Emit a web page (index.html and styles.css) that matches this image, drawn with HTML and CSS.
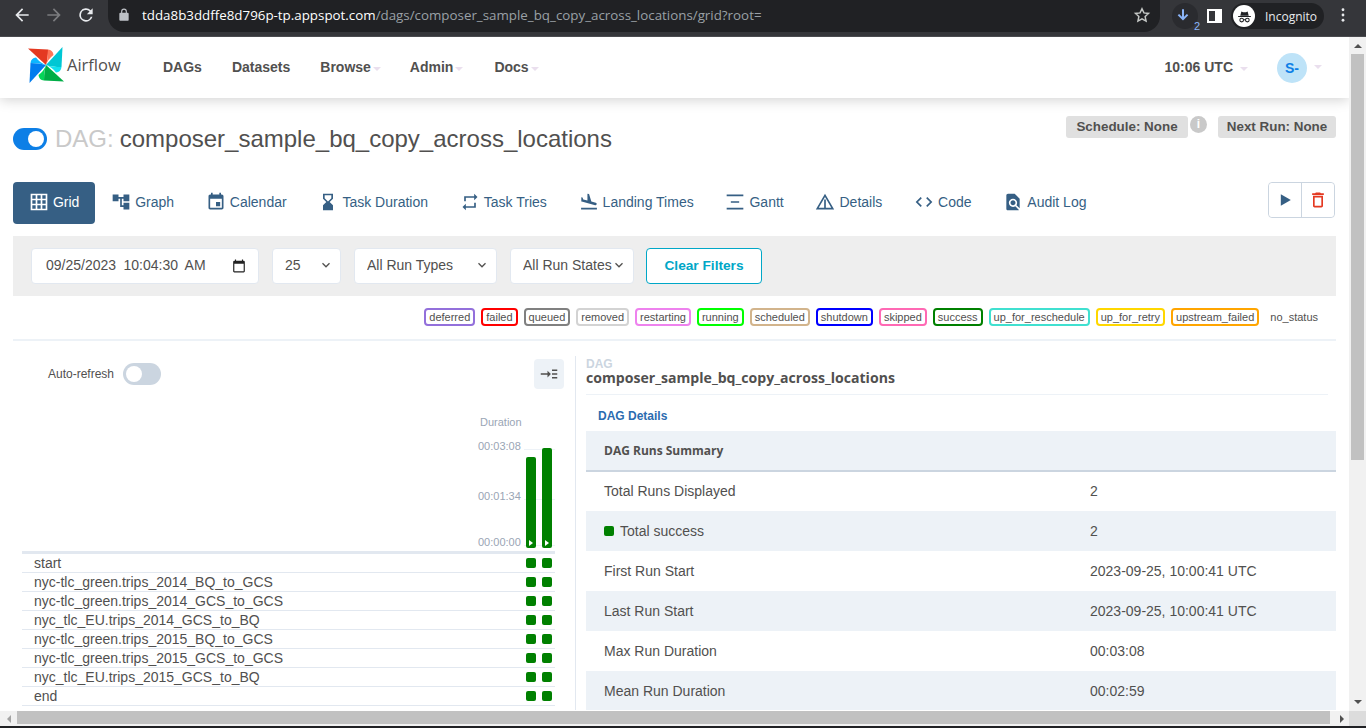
FILE: index.html
```html
<!DOCTYPE html>
<html lang="en">
<head>
    <meta charset="UTF-8">
    <meta name="viewport" content="width=device-width, initial-scale=1.0">
    <title>composer_sample_bq_copy_across_locations - Grid - Airflow</title>
    <link rel="stylesheet" href="styles.css">
</head>
<body>
    <div class="browser-bar">
        <svg class="chrome-btn" viewBox="0 0 24 24"><path fill="#e8eaed" d="M20 11H7.8l5.6-5.6L12 4l-8 8 8 8 1.4-1.4L7.8 13H20z"/></svg>
        <svg class="chrome-btn" viewBox="0 0 24 24"><path fill="#7b7c7f" d="M4 11h12.2l-5.6-5.6L12 4l8 8-8 8-1.4-1.4 5.6-5.6H4z"/></svg>
        <svg class="chrome-btn" viewBox="0 0 24 24"><path fill="#e8eaed" d="M17.65 6.35A8 8 0 1 0 19.73 14h-2.08A6 6 0 1 1 12 6c1.66 0 3.14.69 4.22 1.78L13 11h7V4z"/></svg>
        <div class="address">
            <svg class="lock" viewBox="0 0 24 24"><path fill="#bdc1c6" d="M18 8h-1V6a5 5 0 0 0-10 0v2H6a2 2 0 0 0-2 2v10c0 1.1.9 2 2 2h12a2 2 0 0 0 2-2V10a2 2 0 0 0-2-2zM9 6a3 3 0 0 1 6 0v2H9z"/></svg>
            <span class="url-host">tdda8b3ddffe8d796p-tp.appspot.com</span><span class="url-path">/dags/composer_sample_bq_copy_across_locations/grid?root=</span>
            <svg class="star" viewBox="0 0 24 24"><path fill="none" stroke="#c4c7c5" stroke-width="2" d="M12 3.6l2.6 5.6 6.1.7-4.5 4.2 1.2 6L12 17.1l-5.4 3 1.2-6-4.5-4.2 6.1-.7z"/></svg>
        </div>
        <div class="download">
            <svg viewBox="0 0 24 24"><path fill="none" stroke="#8ab4f8" stroke-width="2.4" d="M12 5v12M6.5 11.5L12 17l5.5-5.5"/></svg>
            <span class="download-count">2</span>
        </div>
        <div class="side-panel"><span></span></div>
        <div class="incognito">
            <span class="incognito-icon">
                <svg viewBox="0 0 24 24"><path fill="#202124" d="M6 11l1.6-6 2.4 1h4l2.4-1 1.6 6zM3 11.4h18v1.4H3z"/><circle cx="8" cy="17" r="2.6" fill="none" stroke="#202124" stroke-width="1.5"/><circle cx="16" cy="17" r="2.6" fill="none" stroke="#202124" stroke-width="1.5"/><path stroke="#202124" stroke-width="1.5" d="M10.5 16.6h3"/></svg>
            </span>
            <span>Incognito</span>
        </div>
        <svg class="chrome-dots" viewBox="0 0 4 16"><circle cx="2" cy="2" r="1.6" fill="#e8eaed"/><circle cx="2" cy="8" r="1.6" fill="#e8eaed"/><circle cx="2" cy="14" r="1.6" fill="#e8eaed"/></svg>
    </div>

    <div class="window">
        <div class="page">
            <nav class="navbar">
                <a class="brand">
                    <svg class="brand-logo" viewBox="0 0 36 36">
                        <g>
                            <path fill="#e43921" d="M0 1.5L20 2.5Q20 12 18 18z"/>
                            <path fill="#ff7557" d="M20 2.5Q25 3 25.5 8Q20 12 18 18Q20 12 20 2.5z"/>
                        </g>
                        <g transform="rotate(90 18 18)">
                            <path fill="#00c7d4" d="M0 1.5L20 2.5Q20 12 18 18z"/>
                            <path fill="#11e1ee" d="M20 2.5Q25 3 25.5 8Q20 12 18 18Q20 12 20 2.5z"/>
                        </g>
                        <g transform="rotate(180 18 18)">
                            <path fill="#00ad46" d="M0 1.5L20 2.5Q20 12 18 18z"/>
                            <path fill="#04d659" d="M20 2.5Q25 3 25.5 8Q20 12 18 18Q20 12 20 2.5z"/>
                        </g>
                        <g transform="rotate(270 18 18)">
                            <path fill="#017cee" d="M0 1.5L20 2.5Q20 12 18 18z"/>
                            <path fill="#0cb6ff" d="M20 2.5Q25 3 25.5 8Q20 12 18 18Q20 12 20 2.5z"/>
                        </g>
                    </svg>
                    <span class="brand-name">Airflow</span>
                </a>
                <ul class="nav-links">
                    <li class="nav-dags">DAGs</li>
                    <li class="nav-datasets">Datasets</li>
                    <li class="nav-browse">Browse<i class="caret"></i></li>
                    <li class="nav-admin">Admin<i class="caret"></i></li>
                    <li>Docs<i class="caret"></i></li>
                </ul>
                <div class="nav-right">
                    <span class="clock">10:06 UTC<i class="caret caret-wide"></i></span>
                    <span class="avatar">S-</span><i class="caret caret-wide"></i>
                </div>
            </nav>

            <div class="content">
                <div class="dag-head">
                    <h1 class="dag-title">
                        <span class="switch"><span class="switch-knob"></span></span>
                        <span class="dag-prefix">DAG:</span>
                        <span>composer_sample_bq_copy_across_locations</span>
                    </h1>
                    <div class="dag-meta">
                        <span class="meta-label meta-schedule">Schedule: None</span>
                        <span class="meta-info">i</span>
                        <span class="meta-label meta-next">Next Run: None</span>
                    </div>
                </div>

                <div class="tabs-row">
                    <a class="tab tab-active"><svg viewBox="0 0 24 24"><path fill="none" stroke="currentColor" stroke-width="2" d="M3 3h18v18H3zM9 3v18M15 3v18M3 9h18M3 15h18"/></svg>Grid</a>
                    <a class="tab"><svg viewBox="0 0 24 24"><path d="M22 11V3h-7v3H9V3H2v8h7V8h2v10h4v3h7v-8h-7v3h-2V8h2v3z"/></svg>Graph</a>
                    <a class="tab"><svg viewBox="0 0 24 24"><path d="M17 12h-5v5h5v-5zM16 1v2H8V1H6v2H5c-1.11 0-1.99.9-1.99 2L3 19c0 1.1.89 2 2 2h14c1.1 0 2-.9 2-2V5c0-1.1-.9-2-2-2h-1V1h-2zm3 18H5V8h14v11z"/></svg>Calendar</a>
                    <a class="tab"><svg viewBox="0 0 24 24"><path d="M18 22l-.01-6L14 12l3.99-4.01L18 2H6v6l4 4-4 3.99V22h12zM8 7.5V4h8v3.5l-4 4-4-4z"/></svg>Task Duration</a>
                    <a class="tab"><svg viewBox="0 0 24 24"><path d="M7 7h10v3l4-4-4-4v3H5v6h2V7zm10 10H7v-3l-4 4 4 4v-3h12v-6h-2v4z"/></svg>Task Tries</a>
                    <a class="tab"><svg viewBox="0 0 24 24"><path d="M2.5 19h19v2h-19zm7.18-5.73l4.35 1.16 5.31 1.42c.8.21 1.62-.26 1.84-1.06.21-.8-.26-1.62-1.06-1.84l-5.31-1.42-2.76-9.02L10.12 2v8.28L5.15 8.95l-.93-2.32-1.45-.39v5.17l1.6.43 5.31 1.43z"/></svg>Landing Times</a>
                    <a class="tab"><svg viewBox="0 0 24 24"><path d="M2 3h20v2H2zM7 11h10v2H7zM2 19h20v2H2z"/></svg>Gantt</a>
                    <a class="tab"><svg viewBox="0 0 24 24"><path d="M1 21h22L12 2 1 21zm3.47-2L12 5.99 19.53 19H4.47zM11 9h2v10h-2z"/></svg>Details</a>
                    <a class="tab"><svg viewBox="0 0 24 24"><path d="M9.4 16.6L4.8 12l4.6-4.6L8 6l-6 6 6 6 1.4-1.4zm5.2 0l4.6-4.6-4.6-4.6L16 6l6 6-6 6-1.4-1.4z"/></svg>Code</a>
                    <a class="tab"><svg viewBox="0 0 24 24"><path d="M20 19.59V8l-6-6H6c-1.1 0-1.99.9-1.99 2L4 20c0 1.1.89 2 2 2h12c.45 0 .85-.15 1.19-.4l-4.43-4.43c-.8.52-1.74.83-2.76.83-2.76 0-5-2.24-5-5s2.24-5 5-5 5 2.24 5 5c0 1.02-.31 1.96-.83 2.75L20 19.59zM9 13c0 1.66 1.34 3 3 3s3-1.34 3-3-1.34-3-3-3-3 1.34-3 3z"/></svg>Audit Log</a>
                    <div class="tab-actions">
                        <button class="action-btn"><svg viewBox="0 0 24 24"><path fill="#365f84" d="M7 5v14l12-7z"/></svg></button>
                        <button class="action-btn"><svg viewBox="0 0 24 24"><path fill="#e43921" d="M6 19c0 1.1.9 2 2 2h8c1.1 0 2-.9 2-2V7H6v12zM8 9h8v10H8V9zm7.5-5l-1-1h-5l-1 1H5v2h14V4z"/></svg></button>
                    </div>
                </div>

                <div class="filters">
                    <div class="date-wrap">
                        <input class="date-input" type="text" value="09/25/2023 10:04:30 AM">
                        <svg class="date-icon" viewBox="0 0 24 24"><path fill="#222" d="M20 3h-1V1h-2v2H7V1H5v2H4a2 2 0 0 0-2 2v16c0 1.1.9 2 2 2h16a2 2 0 0 0 2-2V5a2 2 0 0 0-2-2zm0 18H4V8h16z"/></svg>
                    </div>
                    <div class="select-wrap select-limit">
                        <select><option>25</option></select>
                        <svg class="chevron" viewBox="0 0 24 24"><path fill="none" stroke="#51504f" stroke-width="2.2" d="M6 9l6 6 6-6"/></svg>
                    </div>
                    <div class="select-wrap select-types">
                        <select><option>All Run Types</option></select>
                        <svg class="chevron" viewBox="0 0 24 24"><path fill="none" stroke="#51504f" stroke-width="2.2" d="M6 9l6 6 6-6"/></svg>
                    </div>
                    <div class="select-wrap select-states">
                        <select><option>All Run States</option></select>
                        <svg class="chevron" viewBox="0 0 24 24"><path fill="none" stroke="#51504f" stroke-width="2.2" d="M6 9l6 6 6-6"/></svg>
                    </div>
                    <button class="clear-btn">Clear Filters</button>
                </div>

                <div class="legend">
                    <span class="state state-deferred">deferred</span>
                    <span class="state state-failed">failed</span>
                    <span class="state state-queued">queued</span>
                    <span class="state state-removed">removed</span>
                    <span class="state state-restarting">restarting</span>
                    <span class="state state-running">running</span>
                    <span class="state state-scheduled">scheduled</span>
                    <span class="state state-shutdown">shutdown</span>
                    <span class="state state-skipped">skipped</span>
                    <span class="state state-success">success</span>
                    <span class="state state-reschedule">up_for_reschedule</span>
                    <span class="state state-retry">up_for_retry</span>
                    <span class="state state-upstream">upstream_failed</span>
                    <span class="state">no_status</span>
                </div>

                <div class="main">
                    <div class="grid-panel">
                        <div class="grid-toolbar">
                            <span class="refresh-label">Auto-refresh</span>
                            <span class="switch switch-off"><span class="switch-knob"></span></span>
                            <button class="collapse-btn">
                                <svg viewBox="0 0 24 24"><path fill="#51504f" d="M1 11h9V7.5l4.5 4.5-4.5 4.5V13H1zM16 6h7v2h-7zM16 11h7v2h-7zM16 16h7v2h-7z"/></svg>
                            </button>
                        </div>
                        <div class="duration-label">Duration</div>
                        <div class="chart">
                            <div class="tick"><span>00:03:08</span><i></i></div>
                            <div class="tick"><span>00:01:34</span><i></i></div>
                            <div class="tick"><span>00:00:00</span><i></i></div>
                            <div class="bars">
                                <div class="bar bar-short"><svg viewBox="0 0 10 10"><path fill="#fff" d="M3 2v6l4-3z"/></svg></div>
                                <div class="bar bar-tall"><svg viewBox="0 0 10 10"><path fill="#fff" d="M3 2v6l4-3z"/></svg></div>
                            </div>
                        </div>
                        <div class="task-list">
                            <div class="task-row"><span>start</span><span class="task-runs"><i></i><i></i></span></div>
                            <div class="task-row"><span>nyc-tlc_green.trips_2014_BQ_to_GCS</span><span class="task-runs"><i></i><i></i></span></div>
                            <div class="task-row"><span>nyc-tlc_green.trips_2014_GCS_to_GCS</span><span class="task-runs"><i></i><i></i></span></div>
                            <div class="task-row"><span>nyc_tlc_EU.trips_2014_GCS_to_BQ</span><span class="task-runs"><i></i><i></i></span></div>
                            <div class="task-row"><span>nyc-tlc_green.trips_2015_BQ_to_GCS</span><span class="task-runs"><i></i><i></i></span></div>
                            <div class="task-row"><span>nyc-tlc_green.trips_2015_GCS_to_GCS</span><span class="task-runs"><i></i><i></i></span></div>
                            <div class="task-row"><span>nyc_tlc_EU.trips_2015_GCS_to_BQ</span><span class="task-runs"><i></i><i></i></span></div>
                            <div class="task-row"><span>end</span><span class="task-runs"><i></i><i></i></span></div>
                        </div>
                    </div>

                    <div class="details-panel">
                        <div class="details-head">
                            <div class="details-kicker">DAG</div>
                            <div class="details-name">composer_sample_bq_copy_across_locations</div>
                        </div>
                        <div class="details-link">DAG Details</div>
                        <table class="summary">
                            <thead>
                                <tr><th colspan="2">DAG Runs Summary</th></tr>
                            </thead>
                            <tbody>
                                <tr><td>Total Runs Displayed</td><td>2</td></tr>
                                <tr><td><i class="dot-success"></i>Total success</td><td>2</td></tr>
                                <tr><td>First Run Start</td><td>2023-09-25, 10:00:41 UTC</td></tr>
                                <tr><td>Last Run Start</td><td>2023-09-25, 10:00:41 UTC</td></tr>
                                <tr><td>Max Run Duration</td><td>00:03:08</td></tr>
                                <tr><td>Mean Run Duration</td><td>00:02:59</td></tr>
                            </tbody>
                        </table>
                    </div>
                </div>
            </div>
        </div>

        <div class="vscroll">
            <span class="arrow-up"></span>
            <div class="vscroll-thumb"></div>
            <span class="arrow-down"></span>
        </div>
    </div>

    <div class="hscroll">
        <div class="hscroll-end"><span class="arrow-left"></span></div>
        <div class="hscroll-thumb"></div>
        <div class="hscroll-end hscroll-end-right"><span class="arrow-right"></span></div>
        <div class="hscroll-corner"></div>
    </div>
    <div class="taskbar-edge"></div>
</body>
</html>
```

FILE: styles.css
```css
* {
    margin: 0;
    padding: 0;
    box-sizing: border-box;
}

html, body {
    height: 728px;
    overflow: hidden;
}

body {
    background: white;
    color: #51504f;
    font-family: 'Liberation Sans', Arial, sans-serif;
    font-size: 14px;
}

i {
    font-style: normal;
}

/* browser chrome */
.browser-bar {
    height: 37px;
    background: #35363a;
    border-bottom: 1px solid #4a4b4f;
    display: flex;
    align-items: flex-start;
    padding-left: 12px;
    color: #e8eaed;
}

.chrome-btn {
    width: 20px;
    height: 20px;
    margin: 5px 12px 0 0;
}

.address {
    width: 1052px;
    height: 32px;
    background: #202124;
    border-radius: 0 0 16px 16px;
    display: flex;
    align-items: center;
    padding: 0 9px 2px 9px;
    font-family: 'Open Sans', sans-serif;
    font-size: 13.35px;
}

.lock {
    width: 14px;
    height: 14px;
    margin-right: 11px;
}

.url-host {
    color: white;
}

.url-path {
    color: #9aa0a6;
}

.star {
    width: 18px;
    height: 18px;
    margin-left: auto;
}

.download {
    position: relative;
    width: 26px;
    height: 26px;
    margin: 3px 0 0 12px;
    background: #2a2b2f;
    border-radius: 50%;
}

.download svg {
    width: 20px;
    height: 20px;
    margin: 2px 0 0 1px;
}

.download-count {
    position: absolute;
    right: -2px;
    bottom: -3px;
    color: #8ab4f8;
    font-size: 11px;
}

.side-panel {
    width: 15px;
    height: 14px;
    margin: 9px 0 0 9px;
    background: white;
    border: 2px solid white;
}

.side-panel span {
    display: block;
    width: 6px;
    height: 100%;
    background: #35363a;
}

.incognito {
    width: 93px;
    height: 26px;
    margin: 3px 0 0 9px;
    background: #202124;
    border-radius: 13px;
    display: flex;
    align-items: center;
    gap: 10px;
    padding-left: 2px;
    font-family: 'Open Sans', sans-serif;
    font-size: 12px;
}

.incognito-icon {
    width: 22px;
    height: 22px;
    background: white;
    border-radius: 50%;
    display: flex;
    align-items: center;
    justify-content: center;
}

.incognito-icon svg {
    width: 17px;
    height: 17px;
}

.chrome-dots {
    width: 4px;
    height: 14px;
    margin: 8px 0 0 17px;
}

/* page frame */
.window {
    height: 674px;
    display: flex;
}

.page {
    width: 1349px;
    overflow: hidden;
}

.vscroll {
    width: 17px;
    background: #f1f1f1;
    display: flex;
    flex-direction: column;
    align-items: center;
}

.vscroll-thumb {
    width: 13px;
    height: 406px;
    margin-top: 6px;
    background: #c1c1c1;
}

.arrow-up {
    margin-top: 7px;
    border: 4px solid transparent;
    border-top: 0;
    border-bottom: 4px solid #505050;
}

.arrow-down {
    margin-top: auto;
    margin-bottom: 7px;
    border: 4px solid transparent;
    border-bottom: 0;
    border-top: 4px solid #505050;
}

.hscroll {
    height: 15px;
    background: #f1f1f1;
    display: flex;
    align-items: stretch;
}

.hscroll-end {
    width: 17px;
    display: flex;
    align-items: center;
    justify-content: center;
}

.hscroll-end-right {
    width: 19px;
    padding-left: 4px;
}

.hscroll-thumb {
    width: 1313px;
    height: 13px;
    background: #c1c1c1;
}

.hscroll-corner {
    width: 17px;
    background: #dcdcdc;
}

.arrow-left {
    border: 4px solid transparent;
    border-left: 0;
    border-right: 4px solid #a3a3a3;
}

.arrow-right {
    border: 4px solid transparent;
    border-right: 0;
    border-left: 4px solid #505050;
}

.taskbar-edge {
    height: 2px;
    background: #202124;
}

/* navbar */
.navbar {
    height: 61px;
    background: white;
    box-shadow: 0 2px 12px rgba(0,0,0,0.18);
    display: flex;
    align-items: center;
    padding: 0 0 2px 28px;
    position: relative;
}

.brand {
    display: flex;
    align-items: center;
    width: 135px;
}

.brand-logo {
    width: 36px;
    height: 36px;
    margin-bottom: 3px;
}

.brand-name {
    margin: 0 0 4px 3px;
    font-family: 'Open Sans', sans-serif;
    font-size: 16.5px;
}

.nav-links {
    list-style: none;
    display: flex;
    font-weight: bold;
}

.nav-links li {
    margin-right: 30px;
}

.nav-links .nav-browse {
    margin-right: 29px;
}

.nav-links .nav-admin {
    margin-right: 31px;
}

.caret {
    display: inline-block;
    margin-left: 2px;
    vertical-align: 1px;
    border: 4px solid transparent;
    border-bottom: 0;
    border-top: 4px solid #eadfee;
}

.caret-wide {
    margin-left: 7px;
}

.nav-right {
    margin-left: auto;
    display: flex;
    align-items: center;
    padding-right: 27px;
    font-weight: bold;
}

.clock {
    margin-right: 29px;
}

.avatar {
    width: 30px;
    height: 30px;
    margin-top: 2px;
    background: #bee3f8;
    color: #0d7fe6;
    border-radius: 50%;
    display: flex;
    align-items: center;
    justify-content: center;
}

/* dag header */
.content {
    padding: 0 13px;
}

.dag-head {
    height: 84px;
    display: flex;
    justify-content: space-between;
}

.dag-title {
    display: flex;
    align-items: center;
    gap: 8px;
    height: 64px;
    margin-top: 9px;
    font-size: 24px;
    font-weight: normal;
}

.dag-prefix {
    color: #c9c9c9;
    margin-right: -2px;
}

.switch {
    width: 34px;
    height: 22px;
    background: #0d7fe6;
    border-radius: 11px;
    padding: 3px;
    display: flex;
    justify-content: flex-end;
}

.switch-knob {
    width: 16px;
    height: 16px;
    background: white;
    border-radius: 50%;
}

.switch-off {
    width: 38px;
    background: #cbd5e0;
    justify-content: flex-start;
}

.dag-meta {
    display: flex;
    align-items: flex-start;
    padding-top: 18px;
}

.meta-label {
    height: 22px;
    background: #e0e0e0;
    border-radius: 3px;
    font-size: 13.4px;
    font-weight: bold;
    line-height: 21px;
    text-align: center;
}

.meta-schedule {
    width: 122px;
}

.meta-next {
    width: 118px;
}

.meta-info {
    width: 17px;
    height: 17px;
    margin: 0 11px 0 2px;
    background: #c9c9c9;
    color: white;
    border-radius: 50%;
    font-size: 12px;
    font-weight: bold;
    line-height: 17px;
    text-align: center;
}

/* tabs */
.tabs-row {
    height: 42px;
    display: flex;
    align-items: flex-start;
}

.tab {
    height: 42px;
    padding: 0 15.9px 2px;
    display: flex;
    align-items: center;
    gap: 4px;
    color: #365f84;
    border-radius: 4px;
}

.tab svg {
    width: 20px;
    height: 20px;
    fill: currentColor;
}

.tab-active {
    background: #365f84;
    color: white;
}

.tab-actions {
    margin-left: auto;
    margin-right: 1px;
    display: flex;
    border: 1px solid #cbd5e0;
    border-radius: 4px;
    height: 36px;
}

.action-btn {
    width: 32px;
    background: white;
    border: none;
    border-radius: 4px;
    display: flex;
    align-items: center;
    justify-content: center;
}

.action-btn + .action-btn {
    width: 33px;
    border-left: 1px solid #cbd5e0;
    border-radius: 0 4px 4px 0;
}

.action-btn svg {
    width: 20px;
    height: 20px;
}

/* filters */
.filters {
    height: 60px;
    margin-top: 12px;
    padding: 12px 18px;
    background: #eeeeee;
    display: flex;
    gap: 13px;
}

.date-input,
.select-wrap select {
    height: 36px;
    background: white;
    border: 1px solid #e2e8f0;
    border-radius: 4px;
    color: #51504f;
    font-family: 'Liberation Sans', Arial, sans-serif;
    font-size: 14px;
}

.date-wrap {
    position: relative;
    width: 228px;
}

.date-input {
    width: 100%;
    padding: 0 13px 2px 14px;
    word-spacing: 3.5px;
}

.date-icon {
    position: absolute;
    top: 11px;
    right: 13px;
    width: 14px;
    height: 14px;
    pointer-events: none;
}

.select-wrap {
    position: relative;
}

.select-wrap select {
    width: 100%;
    padding: 0 0 2px 12px;
    appearance: none;
}

.select-limit {
    width: 69px;
}

.select-types {
    width: 143px;
}

.select-states {
    width: 124px;
}

.chevron {
    position: absolute;
    top: 10px;
    right: 8px;
    width: 14px;
    height: 14px;
    pointer-events: none;
}

.clear-btn {
    width: 116px;
    height: 36px;
    margin-left: -1px;
    padding-bottom: 2px;
    background: white;
    border: 1px solid #00a7c7;
    border-radius: 4px;
    color: #00a7c7;
    font-family: 'Liberation Sans', Arial, sans-serif;
    font-size: 13.7px;
    font-weight: bold;
}

/* state legend */
.legend {
    height: 45px;
    padding: 12px 13px 0 0;
    border-bottom: 2px solid #edf2f7;
    display: flex;
    justify-content: flex-end;
    gap: 6px;
}

.state {
    height: 18px;
    padding: 0 3px;
    border: 2px solid transparent;
    border-radius: 4px;
    font-size: 11px;
    line-height: 14px;
}

.state-deferred { border-color: mediumpurple; }
.state-failed { border-color: red; }
.state-queued { border-color: gray; }
.state-removed { border-color: lightgrey; }
.state-restarting { border-color: violet; }
.state-running { border-color: lime; }
.state-scheduled { border-color: tan; }
.state-shutdown { border-color: blue; }
.state-skipped { border-color: hotpink; }
.state-success { border-color: green; }
.state-reschedule { border-color: turquoise; }
.state-retry { border-color: gold; }
.state-upstream { border-color: orange; }

/* grid + details */
.main {
    display: flex;
    height: 369px;
    overflow: hidden;
}

.grid-panel {
    width: 563px;
    margin-top: 15px;
    padding-top: 3px;
    border-right: 1px solid #e2e8f0;
}

.grid-toolbar {
    height: 30px;
    display: flex;
    align-items: center;
    padding: 0 11px 0 35px;
    font-size: 12px;
}

.refresh-label {
    margin-right: 9px;
}

.collapse-btn {
    width: 30px;
    height: 30px;
    margin-left: auto;
    background: #edf2f7;
    border: none;
    border-radius: 4px;
    display: flex;
    align-items: center;
    justify-content: center;
}

.collapse-btn svg {
    width: 18px;
    height: 18px;
}

.duration-label {
    margin-top: 26px;
    padding-left: 467px;
    color: #9aa5b5;
    font-size: 11px;
    line-height: 14px;
}

.chart {
    position: relative;
    height: 112px;
    margin: 10px 20px 0 9px;
}

.tick {
    height: 14px;
    margin-bottom: 36px;
    display: flex;
    gap: 3px;
    padding-left: 456px;
    color: #9aa5b5;
    font-size: 11px;
    line-height: 14px;
}

.tick:nth-child(2) {
    margin-bottom: 32px;
}

.tick i {
    flex: 1;
    height: 1px;
    margin-top: 10px;
    background: #edf2f7;
}

.bars {
    position: absolute;
    right: 3px;
    bottom: 3px;
    display: flex;
    align-items: flex-end;
    gap: 6px;
}

.bar {
    width: 10px;
    background: green;
    border-radius: 2px;
    display: flex;
    align-items: flex-end;
}

.bar svg {
    width: 10px;
    height: 10px;
}

.bar-short {
    height: 91px;
}

.bar-tall {
    height: 100px;
}

.task-list {
    margin: 0 20px 0 9px;
    border-top: 3px solid #e2e8f0;
}

.task-row {
    height: 19px;
    padding: 0 3px 0 12px;
    border-bottom: 1px solid #e2e8f0;
    display: flex;
    align-items: center;
    justify-content: space-between;
    line-height: 18px;
}

.task-runs {
    display: flex;
    gap: 6px;
}

.task-runs i {
    width: 10px;
    height: 10px;
    background: green;
    border-radius: 2px;
}

.details-panel {
    width: 750px;
    margin-left: 10px;
    padding-top: 16px;
}

.details-head {
    margin-right: 8px;
    padding-bottom: 9px;
    border-bottom: 1px solid #edf2f7;
}

.details-kicker {
    color: #cbd5e0;
    font-size: 12px;
    font-weight: bold;
    line-height: 14px;
}

.details-name {
    font-family: 'Open Sans', sans-serif;
    font-size: 14.1px;
    font-weight: bold;
    line-height: 14px;
}

.details-link {
    margin: 14px 0 8px 12px;
    color: #2b6cb0;
    font-size: 12px;
    font-weight: bold;
    line-height: 14px;
}

.summary {
    width: 100%;
    border-collapse: collapse;
}

.summary th {
    height: 40px;
    padding-left: 18px;
    background: #edf2f7;
    border-bottom: 2px solid #cbd5e0;
    font-family: 'Open Sans', sans-serif;
    font-size: 12px;
    text-align: left;
}

.summary td {
    height: 40px;
    padding-left: 18px;
}

.summary td + td {
    width: 264px;
    padding-left: 18px;
}

.summary tbody tr:first-child td {
    padding-bottom: 2px;
}

.summary tbody tr:nth-child(even) {
    background: #edf2f7;
}

.dot-success {
    display: inline-block;
    width: 10px;
    height: 10px;
    margin-right: 6px;
    background: green;
    border-radius: 2px;
}
```
